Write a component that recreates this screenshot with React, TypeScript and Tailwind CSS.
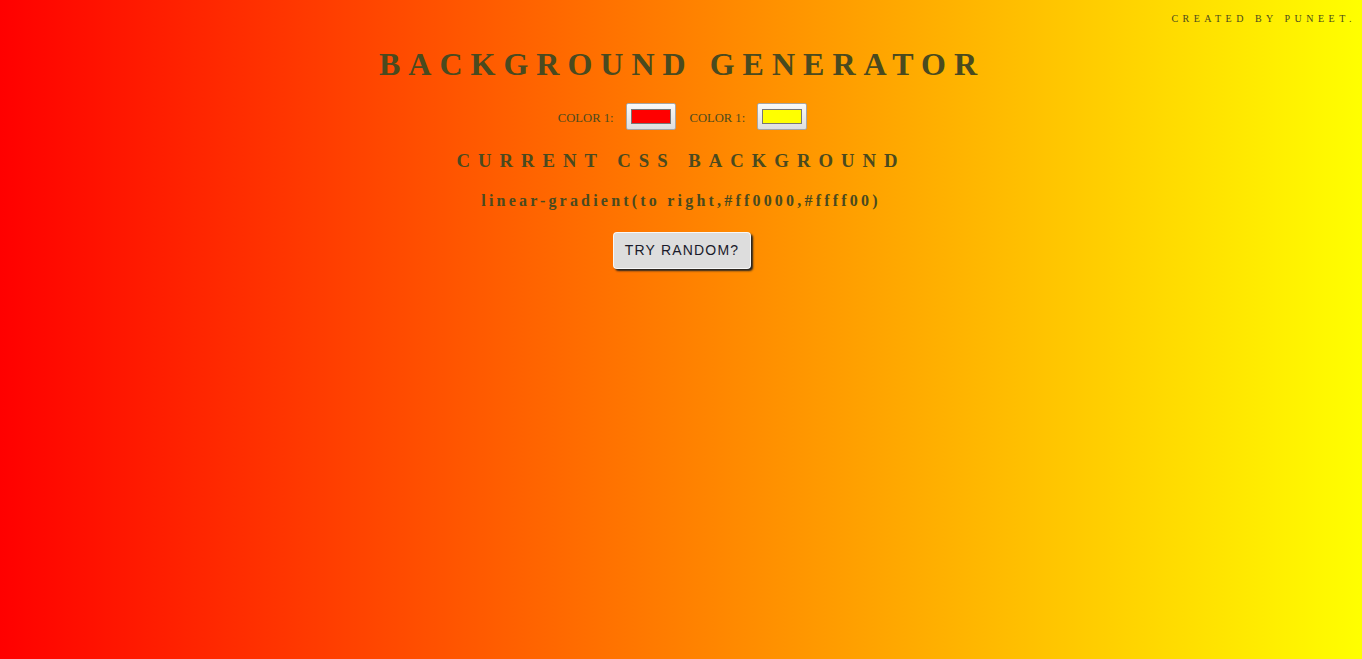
import { useState } from "react";

export default function App() {

  const [color1, setColor1] =
    useState("#ff0000");

  const [color2, setColor2] =
    useState("#ffff00");

  const css =
    `linear-gradient(to right,${color1},${color2})`;

  const randomHex = () =>
    "#" +
    Math.floor(Math.random() * 16777215)
      .toString(16)
      .padStart(6, "0");

  const tryRandom = () => {
    setColor1(randomHex());
    setColor2(randomHex());
  };

  const pickerClass =
    "w-[50px] h-[27px] px-[2px] py-[1px] rounded-[2px] border border-[#a6a6a6] bg-linear-to-b from-[#fafafa] to-[#dedede] cursor-pointer";

  return (
    <div
      className="min-h-screen w-full text-[#4a4a1f] font-['Liberation_Serif',serif]"
      style={{ background: css }}
    >

      {/* CREDIT */}
      <div className="flex justify-end pr-[6px] pt-[13px]">
        <p className="text-[10px] leading-[12px] tracking-[4.5px]">
          CREATED BY PUNEET.
        </p>
      </div>

      {/* TITLE */}
      <h1 className="mt-[21px] text-center text-[32px] leading-[37px] font-bold tracking-[8px] pl-[2px]">
        BACKGROUND GENERATOR
      </h1>

      {/* PICKERS */}
      <div className="mt-[20px] flex items-center justify-center pl-[3px]">

        <label className="text-[12.6px] mr-[12px] mt-[4px]">
          COLOR 1:
        </label>

        <input
          type="color"
          value={color1}
          onChange={(e) => setColor1(e.target.value)}
          className={pickerClass + " mr-[14px]"}
        />

        <label className="text-[12.6px] mr-[12px] mt-[4px]">
          COLOR 1:
        </label>

        <input
          type="color"
          value={color2}
          onChange={(e) => setColor2(e.target.value)}
          className={pickerClass}
        />

      </div>

      <h3 className="mt-[20px] text-center text-[18.72px] leading-[21.5px] font-bold tracking-[8px]">
        CURRENT CSS BACKGROUND
      </h3>

      <p className="mt-[20px] text-center text-[16px] leading-[18.4px] font-bold tracking-[3.2px]">
        {css}
      </p>

      <div className="mt-[22px] flex justify-center">
        <button
          onClick={tryRandom}
          className="bg-[#dddddd] text-[#1a1a2a] font-['Liberation_Sans',Arial,sans-serif] text-[14px] tracking-[1.2px] px-[11px] h-[37px] rounded-[4px] border border-white/80 shadow-[2px_2px_2px_#222] ml-[2px]"
        >
          TRY RANDOM?
        </button>
      </div>

    </div>
  );
}
